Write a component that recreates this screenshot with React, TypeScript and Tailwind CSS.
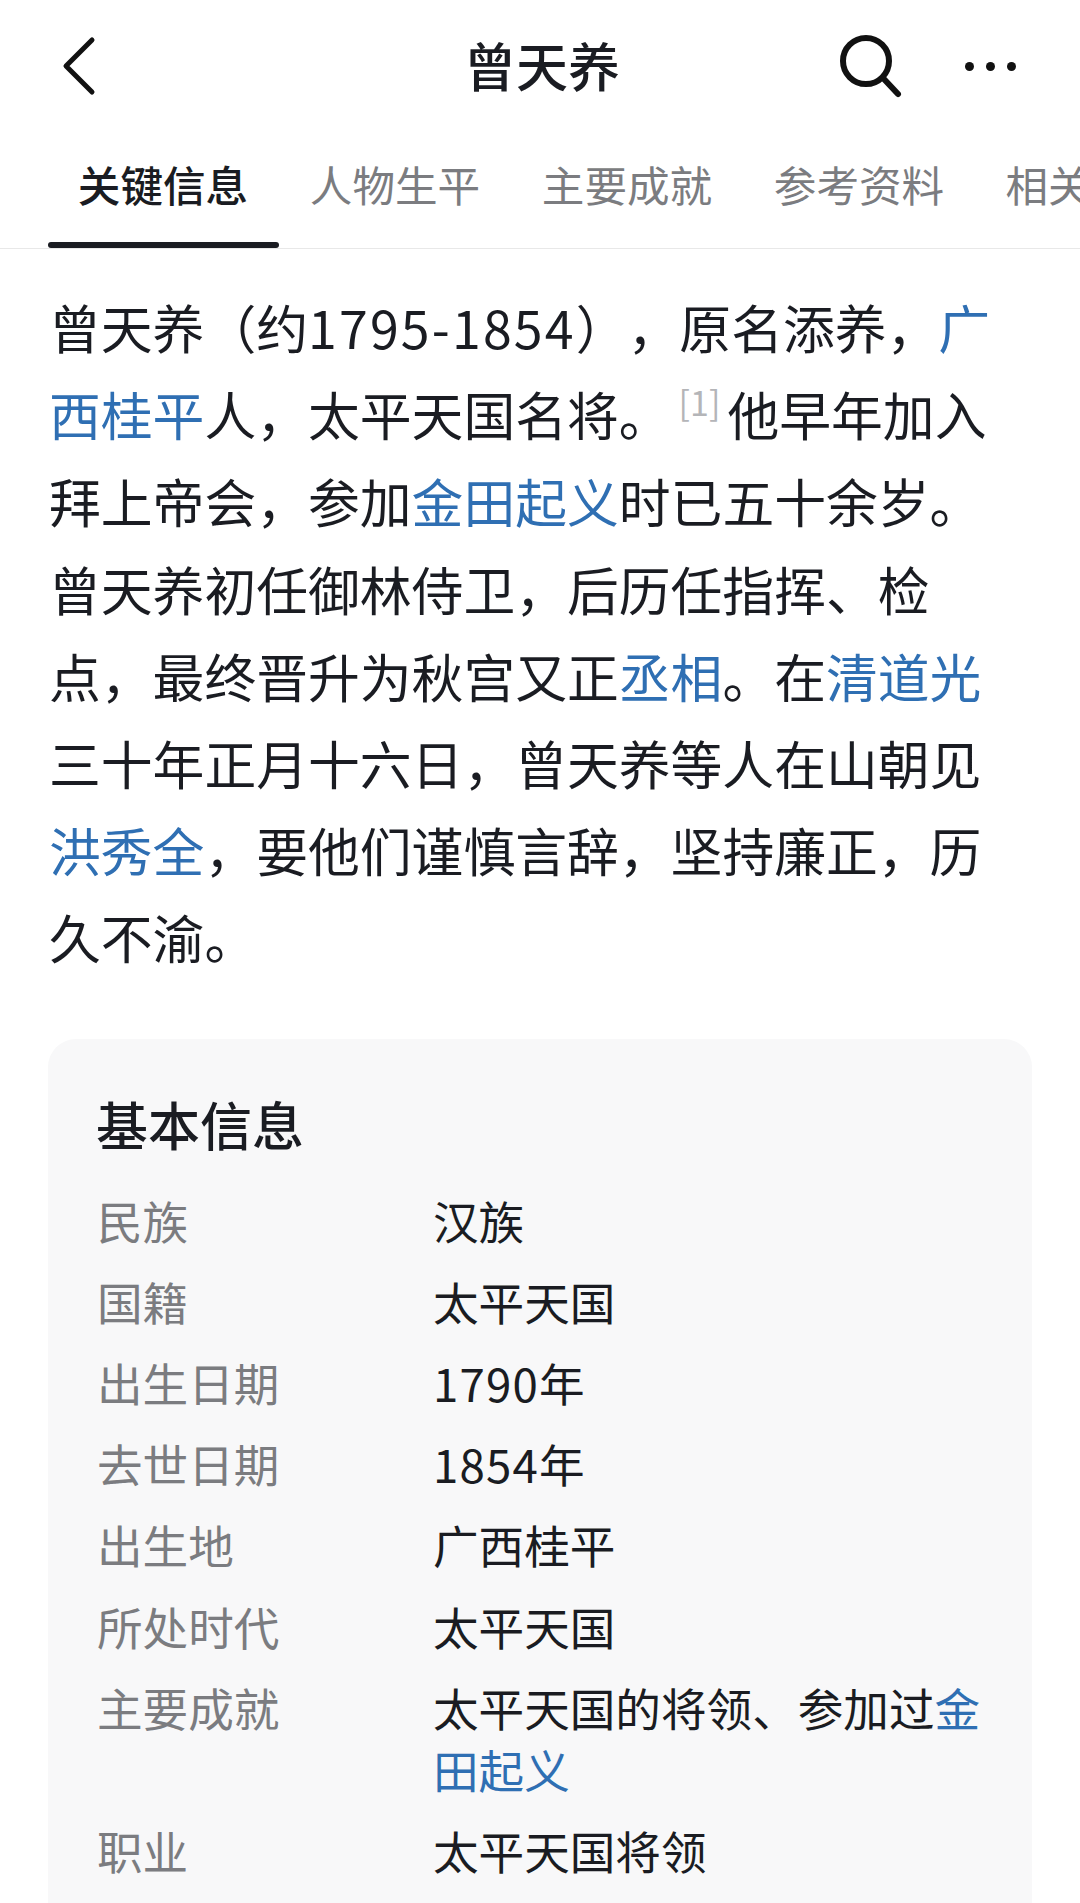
const font = { fontFamily: '"Noto Sans CJK SC", "Noto Sans", sans-serif' };

const L = ({ children }: { children: React.ReactNode }) => <span className="text-[#2f6fb3]">{children}</span>;
const D = ({ children }: { children: React.ReactNode }) => <span className="tracking-[1.2px]">{children}</span>;

const rows: [string, React.ReactNode][] = [
  ["民族", "汉族"],
  ["国籍", "太平天国"],
  ["出生日期", "1790年"],
  ["去世日期", "1854年"],
  ["出生地", "广西桂平"],
  ["所处时代", "太平天国"],
  ["主要成就", <>太平天国的将领、参加过<L>金田起义</L></>],
  ["职业", "太平天国将领"],
];

const tabs = ["关键信息", "人物生平", "主要成就", "参考资料", "相关"];

export default function App() {
  return (
    <div style={font} className="w-[1080px] h-[1903px] overflow-hidden bg-white text-[#1a1c22]">
      <header className="h-[135px] flex items-center relative">
        <svg className="absolute left-[60px] top-[34px]" width="40" height="62" viewBox="0 0 40 62" fill="none" stroke="#111" strokeWidth="5" strokeLinecap="round" strokeLinejoin="round">
          <path d="M32 6 L6 32 L32 58" />
        </svg>
        <h1 className="w-full text-center text-[52px] font-medium leading-none mt-[-6px] pl-[4px]">曾天养</h1>
        <svg className="absolute left-[836px] top-[32px]" width="70" height="70" viewBox="0 0 70 70" fill="none" stroke="#111" strokeWidth="6" strokeLinecap="round">
          <circle cx="30" cy="29" r="23" />
          <path d="M47 46 L62 62" />
        </svg>
        <div className="absolute left-[965px] top-[62px] flex gap-[12px]">
          <i className="w-[9px] h-[9px] rounded-full bg-[#111]" />
          <i className="w-[9px] h-[9px] rounded-full bg-[#111]" />
          <i className="w-[9px] h-[9px] rounded-full bg-[#111]" />
        </div>
      </header>
      <nav className="h-[114px] border-b border-[#e8e8e8] flex pl-[47px]">
        {tabs.map((t, i) => (
          <div key={t} className={`shrink-0 h-[113px] w-[232px] flex justify-center pt-[19px] text-[42.6px] leading-[60px] ${i === 0 ? "font-medium relative" : "text-[#7b7c80]"}`}>
            <span className={i === 4 ? "w-[171px] whitespace-nowrap" : ""}>{t}</span>
            {i === 0 && <div className="absolute left-[1px] bottom-0 w-[231px] h-[6px] rounded-[3px] bg-[#1a1c22]" />}
          </div>
        ))}
      </nav>
      <p className="pl-[49px] pt-[34px] text-[51.8px] leading-[87.2px] w-[1012px] [text-spacing-trim:space-all]">
        曾天养（约<span className="tracking-[2.2px]">1795-1854</span>），原名添养，<L>广西桂平</L>人，太平天国名将。<sup className="text-[34px] text-[#b4b5b8] leading-none align-[3px] ml-[8px] mr-[7px]">[1]</sup>他早年加入拜上帝会，参加<L>金田起义</L>时已五十余岁。曾天养初任御林侍卫，后历任指挥、检点，最终晋升为秋宫又正<L>丞相</L>。在<L>清道光</L>三十年正月十六日，曾天养等人在山朝见<L>洪秀全</L>，要他们谨慎言辞，坚持廉正，历久不渝。
      </p>
      <section className="mt-[58px] ml-[48px] w-[984px] rounded-t-[28px] bg-[#f8f8f9] px-[48px] pt-[54px] h-[900px]">
        <h2 className="text-[52px] font-medium leading-[62px] mb-[34px]">基本信息</h2>
        <div className="flex flex-col gap-[19.2px] pl-[1px]">
          {rows.map(([k, v]) => (
            <div key={k} className="flex text-[45.6px] leading-[62px]">
              <div className="w-[336px] shrink-0 text-[#7b7c80]">{k}</div>
              <div className="flex-1">{typeof v === "string" && /^\d/.test(v) ? <><D>{v.slice(0, 4)}</D>{v.slice(4)}</> : v}</div>
            </div>
          ))}
        </div>
      </section>
    </div>
  );
}
